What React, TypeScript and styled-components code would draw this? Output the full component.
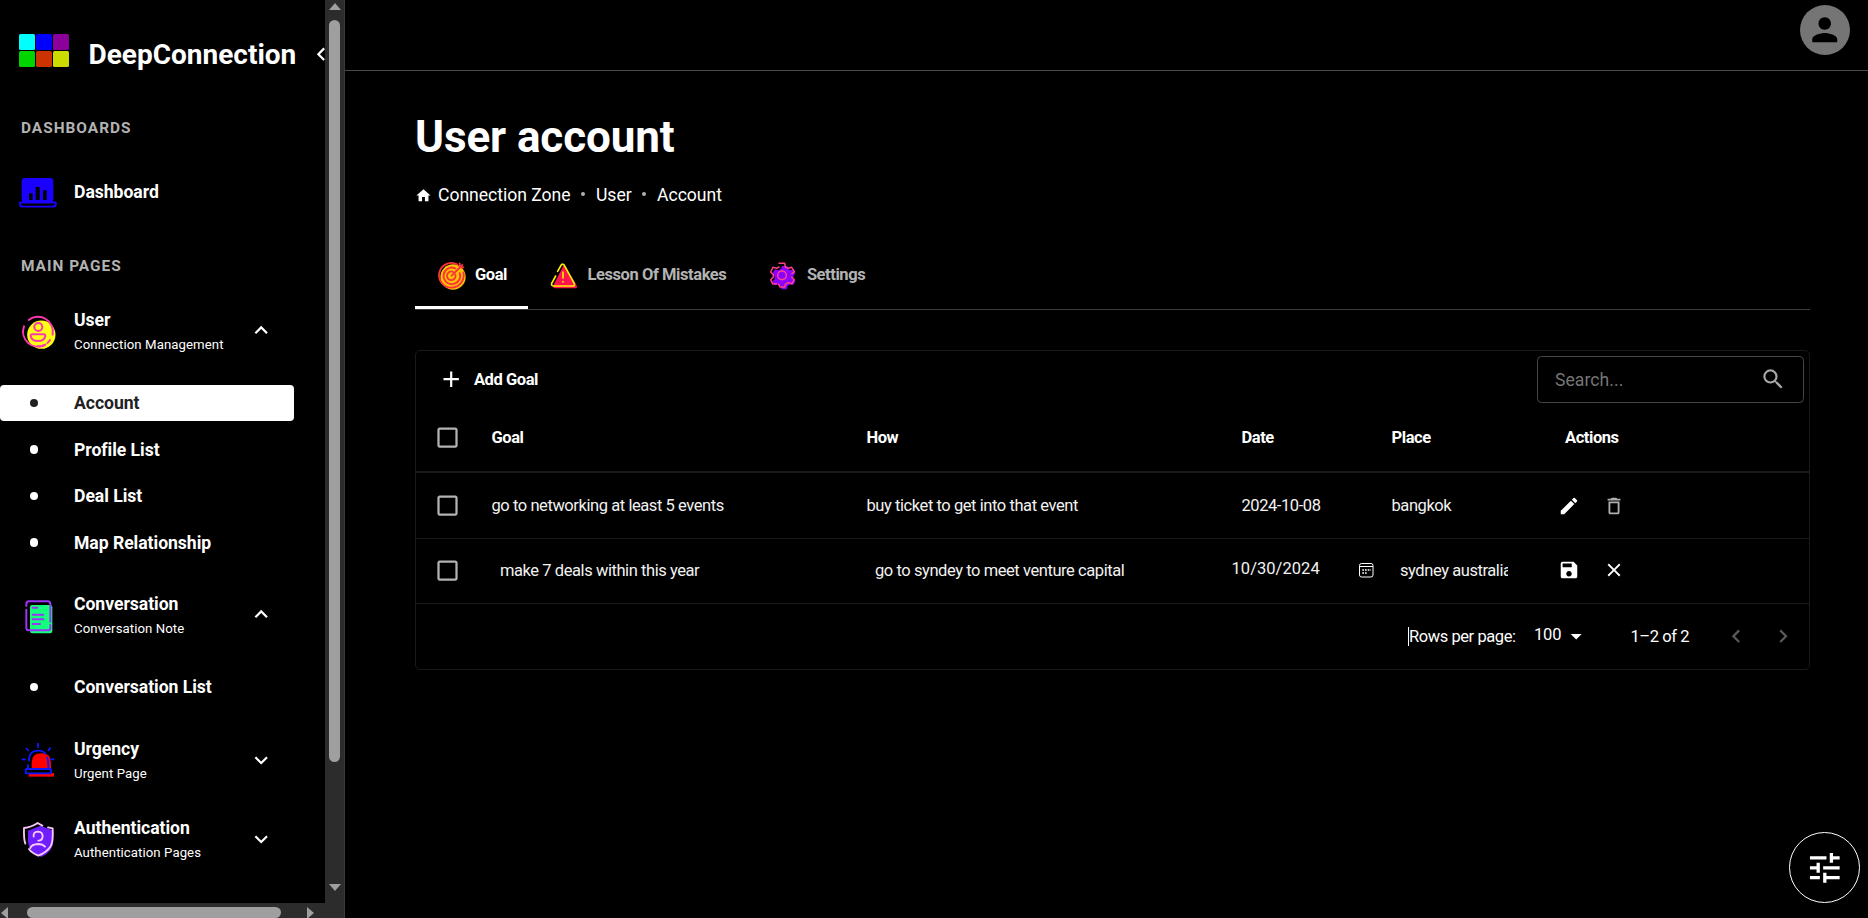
import React from "react";
import styled, { createGlobalStyle } from "styled-components";
import {
  MdAdd,
  MdArrowDropDown,
  MdCheckBoxOutlineBlank,
  MdChevronLeft,
  MdChevronRight,
  MdClose,
  MdDeleteOutline,
  MdEdit,
  MdHome,
  MdKeyboardArrowDown,
  MdKeyboardArrowUp,
  MdPerson,
  MdSave,
  MdSearch,
  MdTune,
} from "react-icons/md";

const GlobalStyle = createGlobalStyle`
  *, *::before, *::after { box-sizing: border-box; }
  html, body { margin: 0; background: #000; overflow: hidden; }
  body {
    font-family: Roboto, "Liberation Sans", sans-serif;
    font-size: 16.5px;
    color: #fff;
  }
  svg { display: block; flex: none; }
`;

/* ---------- shell ---------- */

const Shell = styled.div`
  display: flex;
  width: 100vw;
  height: 918px;
  overflow: hidden;
  background: #000;
`;

const Sidebar = styled.aside`
  flex: none;
  width: 345px;
  height: 918px;
  border-right: 1px solid #3b3b3b;
  display: grid;
  grid-template-columns: 325px 19px;
  grid-template-rows: 903px 19px;
  overflow: hidden;
`;

const SidebarContent = styled.div`
  overflow: hidden;
  display: flex;
  flex-direction: column;
`;

const VTrack = styled.div`
  grid-row: 1 / 3;
  grid-column: 2;
  background: #2c2c2c;
  display: flex;
  flex-direction: column;
  align-items: center;
  padding-top: 3px;
`;

const VThumb = styled.div`
  width: 11px;
  height: 742px;
  margin: 10px 0 122px;
  border-radius: 6px;
  background: #9f9f9f;
`;

const HTrack = styled.div`
  grid-row: 2;
  grid-column: 1;
  background: #2c2c2c;
  display: flex;
  align-items: center;
  padding-left: 1px;
`;

const HThumb = styled.div`
  width: 254px;
  height: 11px;
  margin: 0 26px 0 19px;
  border-radius: 6px;
  background: #9f9f9f;
`;

const VArrow = styled.i<{ $down?: boolean }>`
  width: 0;
  height: 0;
  border: 6.5px solid transparent;
  border-top-width: ${(p) => (p.$down ? "7px" : "0")};
  border-bottom-width: ${(p) => (p.$down ? "0" : "7px")};
  ${(p) => (p.$down ? "border-top-color" : "border-bottom-color")}: #9f9f9f;
`;

const HArrow = styled.i<{ $right?: boolean }>`
  width: 0;
  height: 0;
  border: 6.5px solid transparent;
  border-left-width: ${(p) => (p.$right ? "7px" : "0")};
  border-right-width: ${(p) => (p.$right ? "0" : "7px")};
  ${(p) => (p.$right ? "border-left-color" : "border-right-color")}: #9f9f9f;
`;

/* ---------- sidebar ---------- */

const Brand = styled.div`
  display: flex;
  align-items: center;
  height: 109px;
  padding-left: 19px;
`;

const BrandGrid = styled.div`
  flex: none;
  display: grid;
  grid-template-columns: repeat(3, 16px);
  grid-auto-rows: 16px;
  gap: 1px;
  margin: -8px 19.5px 0 0;
`;

const BrandCell = styled.span<{ $color: string }>`
  background: ${(p) => p.$color};
  border-radius: 1.5px;
`;

const BrandName = styled.div`
  flex: none;
  width: 219px;
  font-size: 28px;
  font-weight: 700;
  line-height: 36px;
`;

const SectionLabel = styled.div`
  height: 38px;
  padding-left: 21px;
  display: flex;
  align-items: center;
  font-size: 15.4px;
  font-weight: 700;
  letter-spacing: 1px;
  color: #b3b3b3;
`;

const NavRow = styled.div<{ $height: number; $top?: number }>`
  display: flex;
  align-items: center;
  height: ${(p) => p.$height}px;
  margin-top: ${(p) => p.$top ?? 0}px;
`;

const NavIcon = styled.div`
  width: 54px;
  margin-left: 20px;
`;

const NavText = styled.div`
  width: 173.5px;
`;

const NavTitle = styled.div`
  font-size: 17.6px;
  font-weight: 700;
  line-height: 26px;
  letter-spacing: -0.04px;
  white-space: nowrap;
`;

const NavSub = styled.div`
  font-size: 13.2px;
  line-height: 24px;
  letter-spacing: 0.08px;
  white-space: nowrap;
`;

const Chevron = styled.span<{ $open?: boolean }>`
  margin-top: ${(p) => (p.$open ? -4 : -1)}px;
`;

const SubMenu = styled.div`
  display: flex;
  flex-direction: column;
  gap: 10.5px;
  padding: 23px 0 6.5px;
`;

const SubItem = styled.div<{ $active?: boolean }>`
  display: flex;
  align-items: center;
  width: 294px;
  height: 36px;
  padding-left: 29.5px;
  border-radius: 4px;
  background: ${(p) => (p.$active ? "#fff" : "transparent")};
  color: ${(p) => (p.$active ? "#212121" : "#fff")};
`;

const Dot = styled.span`
  width: 8.5px;
  height: 8.5px;
  margin-right: 36px;
  border-radius: 50%;
  background: currentColor;
`;

/* ---------- main ---------- */

const Main = styled.main`
  flex: 1;
  display: flex;
  flex-direction: column;
`;

const TopBar = styled.header`
  display: flex;
  justify-content: flex-end;
  height: 71px;
  padding: 5px 18px 0 0;
  border-bottom: 1px solid #4a4a4a;
`;

const Avatar = styled.div`
  display: flex;
  align-items: center;
  justify-content: center;
  width: 50px;
  height: 50px;
  border-radius: 50%;
  background: #757575;
  color: #000;
`;

const Page = styled.div`
  padding: 36px 58px 0 70px;
`;

const PageTitle = styled.h1`
  margin: 0;
  font-size: 44px;
  font-weight: 700;
  line-height: 60px;
  letter-spacing: -0.1px;
`;

const Crumbs = styled.nav`
  display: flex;
  align-items: center;
  height: 26px;
  margin-top: 15px;
  font-size: 17.6px;
  letter-spacing: -0.03px;
`;

const Crumb = styled.span`
  display: flex;
  align-items: center;
  gap: 6px;
`;

const CrumbDot = styled.span`
  width: 4px;
  height: 4px;
  margin: -2px 10.7px 0;
  border-radius: 50%;
  background: #b0b0b0;
`;

const Tabs = styled.div`
  display: flex;
  height: 69px;
  margin-top: 33px;
  border-bottom: 1px solid #3c3c3c;
`;

const Tab = styled.div<{ $active?: boolean }>`
  display: flex;
  align-items: center;
  gap: 9.5px;
  height: 68px;
  padding: 4px 20.5px 0 22.5px;
  font-weight: 700;
  letter-spacing: -0.43px;
  color: ${(p) => (p.$active ? "#fff" : "#b3b3b3")};
  border-bottom: 3px solid ${(p) => (p.$active ? "#fff" : "transparent")};
`;

const TabLabel = styled.span`
  padding-bottom: 2px;
`;

/* ---------- grid ---------- */

const DataCard = styled.section`
  height: 320px;
  margin-top: 40px;
  border: 1px solid #191919;
  border-radius: 5px;
  letter-spacing: -0.43px;
`;

const Toolbar = styled.div`
  display: flex;
  align-items: center;
  justify-content: space-between;
  height: 57px;
  padding: 0 5px 0 22px;
`;

const AddButton = styled.button`
  display: flex;
  align-items: center;
  gap: 9.5px;
  padding: 0;
  border: 0;
  background: none;
  color: #fff;
  font: 700 16.5px Roboto, sans-serif;
  letter-spacing: -0.43px;
`;

const SearchBox = styled.div`
  display: flex;
  align-items: center;
  justify-content: space-between;
  width: 267px;
  height: 47px;
  padding: 0 17px;
  border: 1px solid #464646;
  border-radius: 4.4px;
  font-size: 17.6px;
  letter-spacing: 0.04px;
  color: #757575;
`;

const Row = styled.div<{ $height: number; $head?: boolean; $lift?: number }>`
  display: grid;
  grid-template-columns: 64px 375px 375px 150px 150px 1fr;
  align-items: center;
  height: ${(p) => p.$height}px;
  padding-bottom: ${(p) => p.$lift ?? 0}px;
  border-bottom: ${(p) => (p.$head ? 2 : 1)}px solid #191919;
  font-weight: ${(p) => (p.$head ? 700 : 400)};
  color: ${(p) => (p.$head ? "#fff" : "#f2f2f2")};
`;

const Cell = styled.div<{ $pad?: number; $clip?: number }>`
  display: flex;
  align-items: center;
  padding-left: ${(p) => p.$pad ?? 11.5}px;
  margin-right: ${(p) => p.$clip ?? 0}px;
  overflow: hidden;
  white-space: nowrap;
`;

const CheckCell = styled(Cell)`
  color: #b3b3b3;
`;

const DateInput = styled.div`
  display: flex;
  align-items: center;
  justify-content: space-between;
  width: 150px;
  padding-right: 6.5px;
  letter-spacing: 0.04px;
`;

const DateValue = styled.span`
  padding-bottom: 4px;
`;

const Actions = styled.div`
  display: flex;
  gap: 23px;
  padding-left: 28px;
`;

const Muted = styled.span`
  color: #b0b0b0;
`;

const Footer = styled.div`
  display: flex;
  align-items: center;
  height: 64px;
  padding-left: 992px;
`;

const RowsLabel = styled.span`
  width: 126px;
  border-left: 1px solid #fff;
  line-height: 19px;
`;

const RowsSelect = styled.span`
  display: flex;
  align-items: center;
  width: 96.5px;
  gap: 2px;
`;

const RowsValue = styled.span`
  padding-bottom: 3px;
  letter-spacing: -0.2px;
`;

const RangeLabel = styled.span`
  width: 92px;
`;

const Pager = styled.span`
  display: flex;
  gap: 21px;
  color: #5a5a5a;
`;

const SettingsFab = styled.button`
  position: fixed;
  right: 8px;
  bottom: 15px;
  display: flex;
  align-items: center;
  justify-content: center;
  width: 71px;
  height: 71px;
  padding: 0;
  border: 1px solid #fff;
  border-radius: 50%;
  background: #000;
  color: #fff;
`;

/* ---------- drawings ---------- */

const LaptopDrawing = styled.svg`
  margin: 2px 0 0 -1px;
`;

const LaptopIcon = () => (
  <LaptopDrawing width="38" height="38" viewBox="58 522 114 114">
    <rect x="66" y="534" width="95" height="74" rx="10" fill="#1a00ff" />
    <path d="M88 580h11v20H88zM108 561h12v39h-12zM130 571h11v29h-11z" fill="#000" />
    <path d="M61 607.500H168.500V611q0 9-9 9H70q-9 0-9-9z" fill="#000" stroke="#1a00ff" strokeWidth="5.500" strokeLinejoin="round" />
  </LaptopDrawing>
);

const UserIcon = () => (
  <svg width="36.67" height="36.67" viewBox="60 250 110 110">
    <circle cx="124" cy="312" r="42.500" fill="#ffff14" />
    <g fill="none" stroke="#ff38b0" strokeWidth="6" strokeLinecap="round">
      <path d="M86 268A45 45 0 0 1 158 312" />
      <path d="M72 287A45 45 0 0 0 134 343M142 337Q147 333 150 328" />
      <path d="M113 347Q126 348 136 342" />
      <circle cx="115" cy="289" r="12" />
      <path d="M97 311h34q5 0 5 5c-2 10-11 15-22 15s-20-5-22-15q0-5 5-5z" />
    </g>
  </svg>
);

const NoteIcon = () => (
  <svg width="36.67" height="36.67" viewBox="60 410 110 110">
    <rect x="90" y="431" width="67" height="85" rx="7" fill="#14ff7c" />
    <g fill="none" stroke="#9a35f6" strokeWidth="6" strokeLinecap="round">
      <path d="M79 434v-6q0-8 8-8h56q8 0 8 8v53" />
      <path d="M151 491v8q0 8-8 8H87q-8 0-8-8v-54" />
      <path d="M98 439h14M98 460h32M98 474h32M98 488h22" />
    </g>
  </svg>
);

const SirenIcon = () => (
  <svg width="36.67" height="36.67" viewBox="60 155 110 110">
    <path d="M95 236v-19q0-28 29-28t29 28v19z" fill="#ff0000" />
    <path d="M86 248h76v11H86z" fill="#ff0000" />
    <g fill="none" stroke="#1018ff" strokeWidth="5.500">
      <path d="M84 235v-13M87 213q-2-32 28-32 15 0 23 11M141 200q5 10 4 35" />
      <rect x="77" y="236" width="76" height="13" rx="2" />
      <path d="M114 158v14M78 173l8 9M152 172l-8 10M65 207h12M151 207h12" />
    </g>
  </svg>
);

const ShieldIcon = () => (
  <svg width="36.67" height="36.67" viewBox="60 393 110 110">
    <path d="M122 407l38 15v32q-1 32-36 47-38-15-40-46v-33z" fill="#6f1fff" />
    <g fill="none" stroke="#fbc9f5" strokeWidth="5.500" strokeLinecap="round" strokeLinejoin="round">
      <path d="M76 461q-5-12-4-47 24-3 41-15 6 4 14 8" />
      <path d="M144 412l14 3q2 40-6 54-11 18-37 28-20-8-28-20" />
      <path d="M101 440q-2-15 13-15 14 1 14 14-1 13-13 13" />
      <path d="M91 474q4-11 23-12 14 0 21 8" />
    </g>
  </svg>
);

const TargetIcon = () => (
  <svg width="28" height="28" viewBox="113 515 84 84">
    <circle cx="158" cy="560" r="38" fill="#ffc107" />
    <g fill="none" stroke="#f9353a" strokeWidth="5.500" strokeLinecap="round">
      <path d="M170 522A37 37 0 1 0 189 546" />
      <path d="M165 534A25 25 0 1 0 178 548" />
      <path d="M159 545A13 13 0 1 0 165 552" />
      <path d="M154 556L186 524M178 519v12h11" />
    </g>
  </svg>
);

const WarningIcon = () => (
  <svg width="28" height="28" viewBox="450 515 84 84">
    <path d="M490 526q5 0 8 6l33 56q2 5-4 6h-62q-7-1-6-6z" fill="#ff144d" />
    <g fill="none" stroke="#fff000" strokeWidth="5" strokeLinecap="round" strokeLinejoin="round">
      <path d="M473 543l10-18q5-7 10 0l30 55q2 7-5 7h-58q-7-1-5-8l12-22" />
      <path d="M489 545v18M489 574v1" />
    </g>
  </svg>
);

const GearIcon = () => (
  <svg width="28" height="28" viewBox="1104 515 84 84">
    <path
      d="M1143 527h16l3 10 7 3 9-3 5 12-6 8v9l6 7-6 11-10-2-7 5-3 10h-15l-3-10-8-4-10 2-7-11 7-8v-8l-7-8 8-13 9 3 9-4z"
      fill="#8b00ff"
    />
    <g fill="none" stroke="#ff4088" strokeWidth="4.500" strokeLinecap="round" strokeLinejoin="round">
      <path d="M1134 519h17l2 11 8 4 11-3 8 13-7 6" />
      <path d="M1172 560l8 8-7 12-12-3-8 5-2 8h-14l-4-8" />
      <path d="M1127 580l-12 1-6-13 8-8v-7l-8-8 7-14 11 3 7-4" />
      <circle cx="1143" cy="555" r="13" />
    </g>
  </svg>
);

const CalendarIcon = () => (
  <svg width="15" height="15" viewBox="0 0 15 15" fill="none" stroke="#fff">
    <rect x="0.500" y="0.500" width="13.500" height="13.500" rx="2" />
    <path d="M0.500 3.500h13.500" />
    <path d="M6 7h1.700M8.700 7h1.700M3.300 10h1.700M6 10h1.700M3.300 7h1.700M11 7h.6" strokeWidth="1.500" />
  </svg>
);

/* ---------- data ---------- */

const brandColors = ["#00ffff", "#0000ff", "#8b009b", "#00d500", "#cc3300", "#cddc00"];

type Group = { title: string; sub: string; icon: React.ReactNode; items?: string[] };

const groups: Group[] = [
  {
    title: "User",
    sub: "Connection Management",
    icon: <UserIcon />,
    items: ["Account", "Profile List", "Deal List", "Map Relationship"],
  },
  { title: "Conversation", sub: "Conversation Note", icon: <NoteIcon />, items: ["Conversation List"] },
  { title: "Urgency", sub: "Urgent Page", icon: <SirenIcon /> },
  { title: "Authentication", sub: "Authentication Pages", icon: <ShieldIcon /> },
];

const NavGroup = ({ group, first }: { group: Group; first: boolean }) => (
  <>
    <NavRow $height={60} $top={first ? 17 : 19}>
      <NavIcon>{group.icon}</NavIcon>
      <NavText>
        <NavTitle>{group.title}</NavTitle>
        <NavSub>{group.sub}</NavSub>
      </NavText>
      <Chevron $open={!!group.items}>
        {group.items ? <MdKeyboardArrowUp size={26.4} /> : <MdKeyboardArrowDown size={26.4} />}
      </Chevron>
    </NavRow>
    {group.items && (
      <SubMenu>
        {group.items.map((item) => (
          <SubItem key={item} $active={item === "Account"}>
            <Dot />
            <NavTitle>{item}</NavTitle>
          </SubItem>
        ))}
      </SubMenu>
    )}
  </>
);

const Check = () => (
  <CheckCell $pad={18}>
    <MdCheckBoxOutlineBlank size={27} />
  </CheckCell>
);

export default function App() {
  return (
    <>
      <GlobalStyle />
      <Shell>
        <Sidebar>
          <SidebarContent>
            <Brand>
              <BrandGrid>
                {brandColors.map((c) => (
                  <BrandCell key={c} $color={c} />
                ))}
              </BrandGrid>
              <BrandName>DeepConnection</BrandName>
              <MdChevronLeft size={26.4} />
            </Brand>
            <SectionLabel>DASHBOARDS</SectionLabel>
            <NavRow $height={60} $top={15}>
              <NavIcon>
                <LaptopIcon />
              </NavIcon>
              <NavTitle>Dashboard</NavTitle>
            </NavRow>
            <NavRow $height={25} />
            <SectionLabel>MAIN PAGES</SectionLabel>
            {groups.map((g, i) => (
              <NavGroup key={g.title} group={g} first={i === 0} />
            ))}
          </SidebarContent>
          <VTrack>
            <VArrow />
            <VThumb />
            <VArrow $down />
          </VTrack>
          <HTrack>
            <HArrow />
            <HThumb />
            <HArrow $right />
          </HTrack>
        </Sidebar>

        <Main>
          <TopBar>
            <Avatar>
              <MdPerson size={37.5} />
            </Avatar>
          </TopBar>
          <Page>
            <PageTitle>User account</PageTitle>
            <Crumbs>
              <Crumb>
                <MdHome size={17} />
                Connection Zone
              </Crumb>
              <CrumbDot />
              <Crumb>User</Crumb>
              <CrumbDot />
              <Crumb>Account</Crumb>
            </Crumbs>
            <Tabs>
              <Tab $active>
                <TargetIcon />
                <TabLabel>Goal</TabLabel>
              </Tab>
              <Tab>
                <WarningIcon />
                <TabLabel>Lesson Of Mistakes</TabLabel>
              </Tab>
              <Tab>
                <GearIcon />
                <TabLabel>Settings</TabLabel>
              </Tab>
            </Tabs>

            <DataCard>
              <Toolbar>
                <AddButton>
                  <MdAdd size={26.4} />
                  Add Goal
                </AddButton>
                <SearchBox>
                  Search...
                  <MdSearch size={26.4} color="#a8a8a8" />
                </SearchBox>
              </Toolbar>
              <Row $height={65} $head $lift={4.5}>
                <Check />
                <Cell>Goal</Cell>
                <Cell>How</Cell>
                <Cell>Date</Cell>
                <Cell>Place</Cell>
                <Cell $pad={35}>Actions</Cell>
              </Row>
              <Row $height={66}>
                <Check />
                <Cell>go to networking at least 5 events</Cell>
                <Cell>buy ticket to get into that event</Cell>
                <Cell>2024-10-08</Cell>
                <Cell>bangkok</Cell>
                <Actions>
                  <MdEdit size={22} color="#fff" />
                  <Muted>
                    <MdDeleteOutline size={22} />
                  </Muted>
                </Actions>
              </Row>
              <Row $height={65} $lift={1.5}>
                <Check />
                <Cell $pad={20}>make 7 deals within this year</Cell>
                <Cell $pad={20}>go to syndey to meet venture capital</Cell>
                <Cell $pad={1.5}>
                  <DateInput>
                    <DateValue>10/30/2024</DateValue>
                    <CalendarIcon />
                  </DateInput>
                </Cell>
                <Cell $pad={20} $clip={22}>
                  sydney australia
                </Cell>
                <Actions>
                  <MdSave size={22} color="#fff" />
                  <MdClose size={22} color="#fff" />
                </Actions>
              </Row>
              <Footer>
                <RowsLabel>Rows per page:</RowsLabel>
                <RowsSelect>
                  <RowsValue>100</RowsValue>
                  <MdArrowDropDown size={26.4} />
                </RowsSelect>
                <RangeLabel>1–2 of 2</RangeLabel>
                <Pager>
                  <MdChevronLeft size={26.4} />
                  <MdChevronRight size={26.4} />
                </Pager>
              </Footer>
            </DataCard>
          </Page>
        </Main>
        <SettingsFab aria-label="Settings">
          <MdTune size={39.6} />
        </SettingsFab>
      </Shell>
    </>
  );
}
